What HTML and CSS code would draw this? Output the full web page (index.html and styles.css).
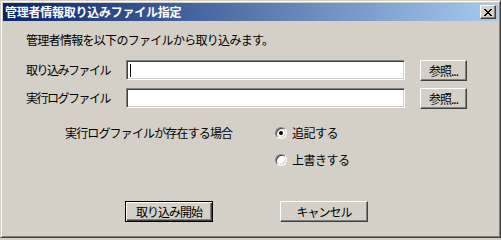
FILE: index.html
```html
<!DOCTYPE html>
<html lang="ja">
<head>
<meta charset="utf-8">
<link rel="stylesheet" href="styles.css">
</head>
<body>
<div class="window">
  <div class="titlebar">
    <span class="title">管理者情報取り込みファイル指定</span>
    <span class="close"><svg width="8" height="7" viewBox="0 0 8 7"><path d="M0 0h2v1H0zM6 0h2v1H6zM1 1h2v1H1zM5 1h2v1H5zM2 2h4v1H2zM3 3h2v1H3zM2 4h4v1H2zM1 5h2v1H1zM5 5h2v1H5zM0 6h2v1H0zM6 6h2v1H6z" fill="#000"/></svg></span>
  </div>
  <div class="content">
    <div class="intro">管理者情報を以下のファイルから取り込みます。</div>
    <div class="row first">
      <span class="label">取り込みファイル</span>
      <div class="field"><span class="caret"></span></div>
      <span class="btn browse">参照...</span>
    </div>
    <div class="row second">
      <span class="label">実行ログファイル</span>
      <div class="field"></div>
      <span class="btn browse">参照...</span>
    </div>
    <div class="options">
      <span class="opt-label">実行ログファイルが存在する場合</span>
      <div class="radios">
        <div class="radio-item"><span class="radio checked"></span><span>追記する</span></div>
        <div class="radio-item"><span class="radio"></span><span>上書きする</span></div>
      </div>
    </div>
    <div class="actions">
      <span class="btn action default">取り込み開始</span>
      <span class="btn action">キャンセル</span>
    </div>
  </div>
</div>
</body>
</html>
```
FILE: styles.css
```css
html, body {
  margin: 0;
  padding: 0;
  background: #d4d0c8;
}
.window {
  width: 501px;
  height: 238px;
  box-sizing: border-box;
  background: #d4d0c8;
  border: 1px solid;
  border-color: #d4d0c8 #404040 #404040 #d4d0c8;
  box-shadow: inset 1px 1px #fff, inset -1px -1px #808080;
  padding: 2px;
  font-family: "Noto Sans CJK JP", sans-serif;
  font-size: 12px;
  color: #000;
  display: flex;
  flex-direction: column;
}
.titlebar {
  height: 18px;
  flex: none;
  background: linear-gradient(to right, #0a246a, #a6caf0);
  display: flex;
  align-items: center;
  justify-content: space-between;
  padding-left: 2px;
  padding-right: 2px;
}
.title {
  color: #fff;
  font-weight: bold;
  font-size: 12px;
  letter-spacing: -0.25px;
  line-height: 18px;
}
.close {
  width: 16px;
  height: 14px;
  box-sizing: border-box;
  background: #d4d0c8;
  border: 1px solid;
  border-color: #fff #404040 #404040 #fff;
  box-shadow: inset -1px -1px #808080;
  display: flex;
  align-items: center;
  justify-content: center;
}
.content {
  padding-left: 23px;
  flex: 1;
}
.intro {
  margin-top: 12px;
  line-height: 14px;
  height: 14px;
  letter-spacing: -0.7px;
}
.row {
  display: flex;
  align-items: flex-start;
}
.row.first { margin-top: 13px; }
.row.second { margin-top: 7px; }
.label {
  width: 100px;
  line-height: 20px;
  letter-spacing: -1.5px;
}
.field {
  width: 279px;
  height: 20px;
  box-sizing: border-box;
  background: #fff;
  border: 1px solid;
  border-color: #808080 #fff #fff #808080;
  box-shadow: inset 1px 1px #404040, inset -1px -1px #d4d0c8;
  padding: 3px 0 0 3px;
}
.caret {
  display: block;
  width: 1px;
  height: 13px;
  background: #000;
}
.btn {
  box-sizing: border-box;
  background: #d4d0c8;
  border: 1px solid;
  border-color: #fff #404040 #404040 #fff;
  box-shadow: inset -1px -1px #808080;
  display: flex;
  align-items: center;
  justify-content: center;
  letter-spacing: -1px;
}
.browse {
  width: 47px;
  height: 21px;
  margin-left: 15px;
}
.options {
  display: flex;
  margin-top: 17px;
}
.opt-label {
  margin-left: 39px;
  width: 210px;
  line-height: 14px;
  letter-spacing: -0.85px;
}
.radios {
  display: flex;
  flex-direction: column;
  gap: 13px;
}
.radio-item {
  display: flex;
  align-items: center;
  height: 14px;
  line-height: 14px;
  letter-spacing: -0.5px;
}
.radio {
  width: 12px;
  height: 12px;
  box-sizing: border-box;
  border-radius: 50%;
  background: #fff;
  border: 1px solid;
  border-color: #808080 #fff #fff #808080;
  box-shadow: inset 1px 1px #404040, inset -1px -1px #d4d0c8;
  margin-right: 5px;
  display: flex;
  align-items: center;
  justify-content: center;
}
.radio.checked::after {
  content: "";
  width: 4px;
  height: 4px;
  border-radius: 50%;
  background: #000;
}
.actions {
  display: flex;
  gap: 67px;
  margin-top: 34px;
  padding-left: 99px;
}
.action {
  width: 88px;
  height: 21px;
}
.action.default {
  border: 1px solid #000;
  box-shadow: inset 1px 1px #fff, inset -1px -1px #404040, inset -2px -2px #808080;
}
```
